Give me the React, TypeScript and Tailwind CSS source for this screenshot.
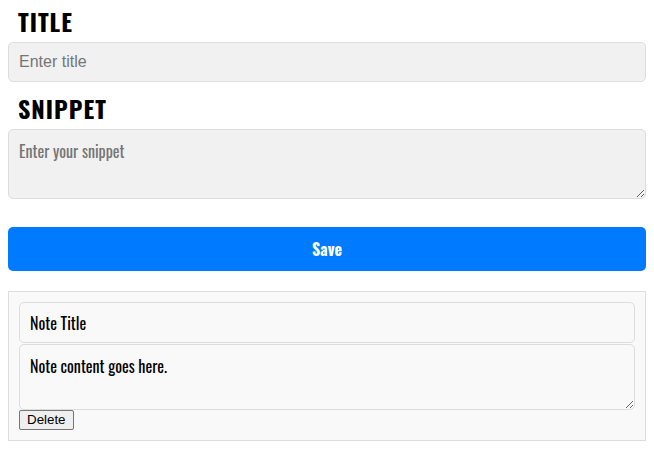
function NoteCard({ title, content }: { title: string; content: string }) {
  return (
    <div className="mt-[20px] border border-[#dddddd] bg-[#f9f9f9] p-[10px]">
      <input
        defaultValue={title}
        className="block h-[41px] w-full rounded-[5px] border border-[#dddddd] bg-[#f9f9f9] px-[10px] font-['Oswald',sans-serif] text-[16px] text-black outline-none"
      />
      <textarea
        defaultValue={content}
        className="mt-px block h-[66px] w-full rounded-[5px] border border-[#dddddd] bg-[#f9f9f9] p-[10px] font-['Oswald',sans-serif] text-[16px] leading-[22px] text-black outline-none"
      />
      <button className="block h-[20px] rounded-[2px] border border-[#767676] bg-[#efefef] px-[7px] font-['Liberation_Sans',Arial,sans-serif] text-[13.33px] leading-[16px] text-black">
        Delete
      </button>
    </div>
  )
}

export default function App() {
  return (
    <div className="min-h-[449px] bg-white px-2 font-['Oswald',sans-serif]">
      <h2 className="h-[42px] pl-[10px] pt-[4px] text-[24px] font-bold leading-[34px] tracking-[1px] text-black">
        TITLE
      </h2>
      <input
        placeholder="Enter title"
        className="block h-[40px] w-full rounded-[5px] border border-[#dddddd] bg-[#f1f1f1] px-[10px] font-['Liberation_Sans',Arial,sans-serif] text-[16px] outline-none placeholder:text-[#757575]"
      />
      <h2 className="h-[47px] pl-[10px] pt-[6px] text-[24px] font-bold leading-[40px] tracking-[1px] text-black">
        SNIPPET
      </h2>
      <textarea
        placeholder="Enter your snippet"
        className="block h-[70px] w-full rounded-[5px] border border-[#dddddd] bg-[#f1f1f1] p-[10px] text-[16px] leading-[22px] outline-none placeholder:text-[#757575]"
      />
      <button className="mt-[28px] block h-[44px] w-full rounded-[5px] bg-[#007bff] text-[16px] font-bold text-white">
        Save
      </button>
      <NoteCard title="Note Title" content="Note content goes here." />
    </div>
  )
}
